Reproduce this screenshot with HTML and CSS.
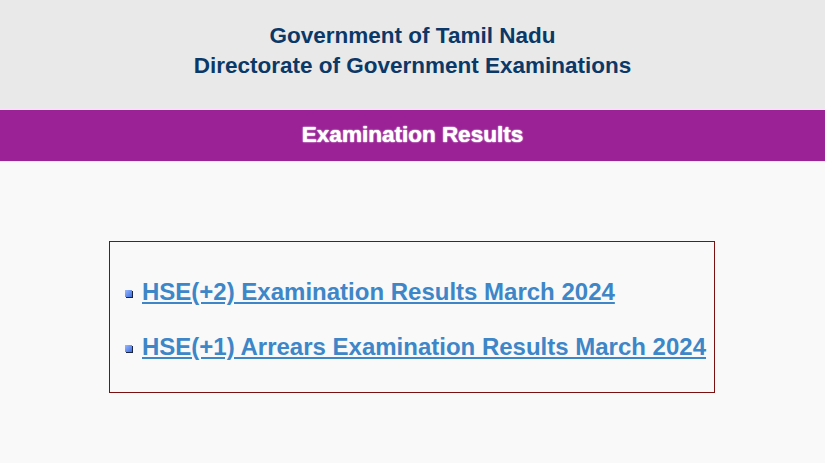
FILE: index.html
```html
<!DOCTYPE html>
<html>
<head>
<meta charset="utf-8">
<link rel="stylesheet" href="styles.css">
</head>
<body>
<header class="top">
  <div class="gov">Government of Tamil Nadu</div>
  <div class="gov">Directorate of Government Examinations</div>
</header>
<div class="band">Examination Results</div>
<main class="content">
  <div class="box">
    <ul class="links">
      <li><a href="#">HSE(+2) Examination Results March 2024</a></li>
      <li><a href="#">HSE(+1) Arrears Examination Results March 2024</a></li>
    </ul>
  </div>
</main>
</body>
</html>
```
FILE: styles.css
```css
html, body { margin: 0; padding: 0; }
body {
  background: #f9f9f9;
  font-family: "Liberation Sans", Arial, sans-serif;
  height: 463px;
  overflow: hidden;
}
.top {
  background: #e9e9e9;
  height: 110px;
  box-sizing: border-box;
  padding-top: 21px;
  text-align: center;
  border-bottom: 2px solid #efe6ef;
}
.gov {
  color: #0b3866;
  font-weight: bold;
  font-size: 22.5px;
  line-height: 30px;
}
.band {
  background: #9a2196;
  height: 52px;
  box-sizing: border-box;
  line-height: 50px;
  text-align: center;
  color: #fff;
  font-weight: bold;
  font-size: 22.5px;
  text-shadow: 0 0 1px #fff, 0 0 2px rgba(255,255,255,0.7);
  border-bottom: 1px solid #f3e8f3;
}
.content {
  padding-top: 79px;
}
.box {
  margin-left: 109px;
  width: 606px;
  height: 152px;
  box-sizing: border-box;
  border: 1px solid #7a1010;
}
.links {
  list-style: none;
  margin: 0;
  padding: 22px 0 0 15px;
}
.links li {
  display: flex;
  align-items: center;
  gap: 10px;
  height: 55px;
  line-height: 30px;
}
.links li::before {
  content: "";
  width: 7px;
  height: 7px;
  background: linear-gradient(135deg, #9ab8ff, #3a6fe0);
  box-shadow: 1px 1px 0 #1a2440;
  margin-top: 4px;
  flex: none;
}
.links a {
  color: #3d86c8;
  font-weight: bold;
  font-size: 24px;
  text-decoration: underline;
  text-underline-offset: 2px;
}
```
